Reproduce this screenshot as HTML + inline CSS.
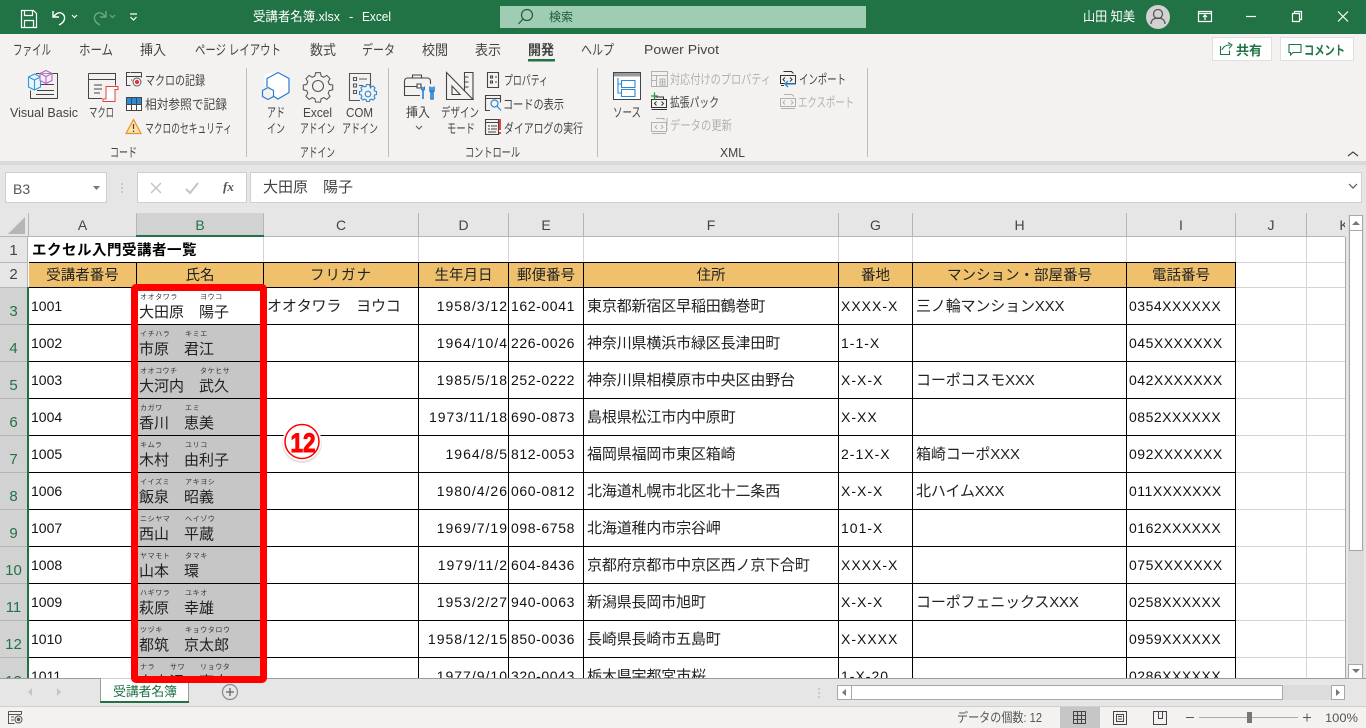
<!DOCTYPE html>
<html lang="ja"><head><meta charset="utf-8"><title>受講者名簿.xlsx - Excel</title>
<style>
html,body{margin:0;padding:0;width:1366px;height:728px;overflow:hidden;background:#e6e6e6}
body{position:relative;font-family:"Liberation Sans","Noto Sans CJK JP",sans-serif}
svg{position:absolute;left:0;top:0;font-family:"Liberation Sans","Noto Sans CJK JP",sans-serif}
svg text{white-space:pre}
#grid{position:absolute;left:0;top:213px;width:1345px;height:465px;overflow:hidden;background:#fff}
#gridin{position:absolute;left:0;top:-213px;width:1345px;height:700px}
.r{position:absolute;left:0;width:1345px;height:37px}
.r span{position:absolute;top:10px;height:18px;line-height:18px;font-size:14px;white-space:nowrap;color:#111}
.r .j{top:11px;font-size:15px;letter-spacing:-.15px;color:#222}
.a{left:31px}.cc{left:267px}.d{left:418px;width:90px;text-align:right;letter-spacing:1px}.e{left:511px;letter-spacing:.6px}.f{left:587px}.g{left:841px;letter-spacing:1px}.h{left:916px}.i{left:1129px;letter-spacing:.5px}
.r .nm{left:139px;top:17px;font-size:15px;letter-spacing:0;color:#222}
.r .fu{top:7px;height:8px;line-height:8px;font-size:7px;letter-spacing:.6px;color:#333}
.r .rh{left:0;width:27px;top:16px;text-align:center;color:#217346;font-size:15px}
.hd{position:absolute;top:264px;height:25px;line-height:25px;text-align:center;font-size:14.5px;color:#222;white-space:nowrap}
.ch{position:absolute;top:213px;height:24px;line-height:24px;text-align:center;font-size:14px;color:#444}
#frame{position:absolute;left:131px;top:284px;width:136px;height:399px;box-sizing:border-box;border:7px solid #f00;border-radius:5px}
</style></head><body>

<!-- chrome -->
<svg width="1366" height="728" viewBox="0 0 1366 728" style="z-index:1">
<rect width="1366" height="34" fill="#217346"/>
<rect y="34" width="1366" height="127" fill="#f3f2f1"/>
<rect y="161" width="1366" height="4" fill="#d9d9d9"/>
<rect x="500" y="6" width="366" height="22" fill="#9fcdb3"/>

<!-- QAT -->
<g fill="none" stroke="#fff" stroke-width="1.2">
<path d="M21.5 10.5h12l3 3v14h-15zM24.5 10.5v5h8v-5M24.5 27.5v-7h9v7"/>
<path d="M53 11v6h6M53.5 17c2-3 5-5 7.5-4 3 1 4.5 4 3 7.5-1 2-3 3.5-5 4.5" stroke-width="1.4"/>
<path d="M72 15l2.5 2.5 2.5-2.5"/>
<g stroke="#6ea588"><path d="M106 11v6h-6M105.500 17c-2-3-5-5-7.500-4-3 1-4.500 4-3 7.500 1 2 3 3.500 5 4.500" stroke-width="1.400"/><path d="M110 15l2.500 2.500 2.500-2.500"/></g>
<path d="M130 14h7M130.500 17l3 3 3-3"/>
</g>
<g fill="#fff" font-size="13">
<text x="253" y="21" textLength="87" lengthAdjust="spacingAndGlyphs">受講者名簿.xlsx</text>
<text x="349" y="21">-</text>
<text x="362" y="21" textLength="29" lengthAdjust="spacingAndGlyphs">Excel</text>
<text x="1083" y="21" textLength="52" lengthAdjust="spacingAndGlyphs">山田 知美</text>
</g>
<g fill="none" stroke="#1e5c3a" stroke-width="1.2"><circle cx="527" cy="15" r="5.500"/><path d="M523 19l-4.500 5"/></g>
<text x="549" y="21" font-size="12" fill="#1e5c3a" textLength="24" lengthAdjust="spacingAndGlyphs">検索</text>
<circle cx="1158" cy="17" r="12" fill="#d2d2d2"/>
<g fill="none" stroke="#555" stroke-width="1.300"><circle cx="1158" cy="14" r="4.500"/><path d="M1151 24c0-4 3-6 7-6s7 2 7 6"/></g>
<g fill="none" stroke="#fff" stroke-width="1.200">
<path d="M1198.500 11.500h13v10h-13zM1198.500 13.500h13M1205 20v-5M1203 17l2-2 2 2"/>
<path d="M1246 16.500h10"/>
<path d="M1292.500 13.500h7v8h-7zM1294.500 13.500v-2h7v8h-2"/>
<path d="M1338 11.500l10 10M1348 11.500l-10 10"/>
</g>

<!-- tabs -->
<g font-size="14" fill="#444">
<text x="13" y="55" textLength="38" lengthAdjust="spacingAndGlyphs">ファイル</text>
<text x="79" y="55" textLength="34" lengthAdjust="spacingAndGlyphs">ホーム</text>
<text x="140" y="55" textLength="26" lengthAdjust="spacingAndGlyphs">挿入</text>
<text x="195" y="55" textLength="86" lengthAdjust="spacingAndGlyphs">ページ レイアウト</text>
<text x="310" y="55" textLength="26" lengthAdjust="spacingAndGlyphs">数式</text>
<text x="362" y="55" textLength="33" lengthAdjust="spacingAndGlyphs">データ</text>
<text x="422" y="55" textLength="26" lengthAdjust="spacingAndGlyphs">校閲</text>
<text x="475" y="55" textLength="26" lengthAdjust="spacingAndGlyphs">表示</text>
<text x="528" y="55" textLength="26" lengthAdjust="spacingAndGlyphs" font-weight="700">開発</text>
<text x="581" y="55" textLength="33" lengthAdjust="spacingAndGlyphs">ヘルプ</text>
<text x="644" y="54" font-size="13" textLength="75" lengthAdjust="spacingAndGlyphs">Power Pivot</text>
</g>
<rect x="528" y="59" width="27" height="2.500" fill="#217346"/>
<rect x="1212.500" y="37.500" width="59" height="23" fill="#fff" stroke="#e1dfdd"/>
<rect x="1280.500" y="37.500" width="73" height="23" fill="#fff" stroke="#e1dfdd"/>
<g fill="none" stroke="#217346" stroke-width="1.100">
<path d="M1220.500 46v8.500h9v-4M1222 50c1-3 4-5 8-5M1228 42.500l4 2.500-3 3.500"/>
<path d="M1289 44.500h12v8h-8l-2.500 2.500v-2.500h-1.500z"/>
</g>
<g font-size="13" font-weight="700" fill="#217346">
<text x="1236" y="55" textLength="26" lengthAdjust="spacingAndGlyphs">共有</text>
<text x="1304" y="55" textLength="41" lengthAdjust="spacingAndGlyphs">コメント</text>
</g>

<!-- separators -->
<g fill="#bdbdbd"><rect x="246" y="68" width="1" height="89"/><rect x="388" y="68" width="1" height="89"/><rect x="597" y="68" width="1" height="89"/><rect x="867" y="68" width="1" height="89"/></g>

<!-- ribbon labels -->
<g font-size="13" fill="#444">
<text x="10" y="117" font-size="12.500" textLength="68" lengthAdjust="spacingAndGlyphs">Visual Basic</text>
<text x="89" y="117" textLength="25" lengthAdjust="spacingAndGlyphs">マクロ</text>
<text x="145" y="85" textLength="60" lengthAdjust="spacingAndGlyphs">マクロの記録</text>
<text x="145" y="109" textLength="82" lengthAdjust="spacingAndGlyphs">相対参照で記録</text>
<text x="145" y="133" textLength="87" lengthAdjust="spacingAndGlyphs">マクロのセキュリティ</text>
<text x="267" y="117" textLength="18" lengthAdjust="spacingAndGlyphs">アド</text>
<text x="267" y="133" textLength="18" lengthAdjust="spacingAndGlyphs">イン</text>
<text x="303" y="117" font-size="12.500" textLength="29" lengthAdjust="spacingAndGlyphs">Excel</text>
<text x="300" y="133" textLength="35" lengthAdjust="spacingAndGlyphs">アドイン</text>
<text x="346" y="117" font-size="12.500" textLength="27" lengthAdjust="spacingAndGlyphs">COM</text>
<text x="342" y="133" textLength="36" lengthAdjust="spacingAndGlyphs">アドイン</text>
<text x="406" y="117" textLength="24" lengthAdjust="spacingAndGlyphs">挿入</text>
<text x="441" y="117" textLength="38" lengthAdjust="spacingAndGlyphs">デザイン</text>
<text x="447" y="133" textLength="28" lengthAdjust="spacingAndGlyphs">モード</text>
<text x="504" y="85" textLength="44" lengthAdjust="spacingAndGlyphs">プロパティ</text>
<text x="503" y="109" textLength="61" lengthAdjust="spacingAndGlyphs">コードの表示</text>
<text x="504" y="133" textLength="79" lengthAdjust="spacingAndGlyphs">ダイアログの実行</text>
<text x="613" y="117" textLength="28" lengthAdjust="spacingAndGlyphs">ソース</text>
<text x="670" y="107" textLength="49" lengthAdjust="spacingAndGlyphs">拡張パック</text>
<text x="799" y="84" textLength="47" lengthAdjust="spacingAndGlyphs">インポート</text>
<text x="110" y="157" textLength="27" lengthAdjust="spacingAndGlyphs">コード</text>
<text x="300" y="157" textLength="35" lengthAdjust="spacingAndGlyphs">アドイン</text>
<text x="465" y="157" textLength="55" lengthAdjust="spacingAndGlyphs">コントロール</text>
<text x="720" y="157" font-size="12.500" textLength="25" lengthAdjust="spacingAndGlyphs">XML</text>
</g>
<g font-size="13" fill="#b1b1b1">
<text x="670" y="84" textLength="101" lengthAdjust="spacingAndGlyphs">対応付けのプロパティ</text>
<text x="670" y="130" textLength="62" lengthAdjust="spacingAndGlyphs">データの更新</text>
<text x="798" y="107" textLength="56" lengthAdjust="spacingAndGlyphs">エクスポート</text>
</g>

<!-- ribbon icons -->
<g fill="none" stroke="#444" stroke-width="1">
<path d="M36 73.500h21.500v25h-27v-8M41 84.500h13M37 90.500h17M36 94.500h18"/>
<path d="M88.500 73.500h27v12M102 98.500h-13.500v-25M88.500 79.500h27M94 85h8M94 89h8M94 93h6"/>
<path d="M130 72.500h-3.500v13h4M126.500 76.500h15M141.500 72.500h-11M141.500 72.500v5"/>
<path d="M131 80h1M131 84h0"/>
</g>
<g fill="none" stroke="#2b9ae0" stroke-width="1.100"><path d="M28.500 77l6-3 6 3v10l-6 3-6-3zM28.500 77l6 3 6-3M34.500 80v10" fill="#eaf5fc"/></g>
<g fill="none" stroke="#b565c7" stroke-width="1.100"><path d="M40 73.500l6-3 6 3v7l-6 3-6-3zM40 73.500l6 3 6-3M46 76.500v7" fill="#f6ecf8"/></g>
<path d="M106 86.500h12v3h-3v12h-12v-2.500h3z" fill="#fff" stroke="#e8403a" stroke-width="1"/>
<circle cx="137" cy="82" r="4" fill="#fff" stroke="#555"/><circle cx="137" cy="82" r="2.200" fill="#e8303a"/>
<rect x="126.500" y="97.500" width="15" height="13" fill="#fff" stroke="#444"/>
<rect x="127" y="98" width="14" height="6" fill="#2b8ad6"/>
<path d="M131.500 97.500v13M136.500 97.500v13M126.500 104.500h15" stroke="#444" fill="none"/>
<path d="M133.500 119.500l7.500 14h-15z" fill="#fbe3a8" stroke="#e8912d" stroke-width="1.200"/>
<path d="M133.500 124v5M133.500 130.500v1.500" stroke="#444" stroke-width="1.200" fill="none"/>

<g fill="none" stroke="#2b7cd3" stroke-width="1.200">
<path d="M278 72.500l11 6.500v13l-11 7-7-4v-8.500l-7-1v-11z" fill="#fff" stroke="none"/>
<path d="M267 87v-8.500l11-6 11 6v14l-11 6.500-5-3"/>
<path d="M268 87.500l5.500 3v6l-5.500 3-5.500-3v-6z"/>
</g>
<g fill="none" stroke="#555" stroke-width="1.100">
<circle cx="318" cy="86" r="5.500"/>
<path d="M315.500 72.500h5l.8 3.600 2.800 1.200 3.200-2 3.400 3.500-2 3.100 1.200 2.900 3.600.7v5l-3.600.8-1.200 2.800 2 3.200-3.400 3.400-3.200-2-2.800 1.200-.8 3.600h-5l-.8-3.600-2.800-1.200-3.200 2-3.400-3.400 2-3.200-1.200-2.800-3.600-.8v-5l3.600-.7 1.200-2.900-2-3.100 3.400-3.500 3.200 2 2.800-1.200z" transform="translate(318 86) scale(.95) translate(-318 -86.500)"/>
<path d="M360 100.500h-10.500v-27h21v15"/>
<path d="M353.500 77.500h3v3h-3zM353.500 84h3v3h-3zM353.500 90.500h3v3h-3zM359 79h8M359 85.500h4"/>
</g>
<g fill="none" stroke="#2b8ad6" stroke-width="1.100">
<circle cx="368" cy="94" r="2.800"/>
<path d="M366.500 87.500h3l.4 1.800 1.500.6 1.600-1 2.100 2.100-1 1.600.6 1.500 1.800.4v3l-1.800.4-.6 1.500 1 1.600-2.100 2.100-1.600-1-1.500.6-.4 1.800h-3l-.4-1.800-1.500-.6-1.600 1-2.100-2.100 1-1.600-.6-1.500-1.800-.4v-3l1.800-.4.600-1.500-1-1.600 2.100-2.100 1.600 1 1.500-.6z" transform="translate(0 -3)"/>
</g>
<g fill="none" stroke="#444" stroke-width="1.100">
<path d="M420 95.500h-15.500v-14.500a3 3 0 0 1 3-3h20a3 3 0 0 1 3 3v3M404.500 86.500h12M417 84h4v4h-4zM412.500 78v-3h9v3"/>
<path d="M446.500 72.500l26.500 27h-26.500zM452 86l8 8.500h-8zM464.500 90.500v-18h8.500v27M464.500 77h4M464.500 82h4M464.500 87h4"/>
<path d="M487.500 72.500h11v15h-11zM490.500 76h2v2h-2zM490.500 81h2v2h-2zM495 77h2M495 82h2"/>
<path d="M490 110.500h-4.500v-15h15v7M485.500 98.500h15"/>
<path d="M485.500 119.500h13v15h-13zM485.500 122.500h13M488 126h2M488 129h2M491 126h6M491 129h6M488 132h8"/>
</g>
<path d="M423 87v12M432 87v4M430 86.500v4.500h4v-4.500M431 92h2v7h-2z" stroke="#2b7cd3" stroke-width="1.600" fill="none"/>
<path d="M424.500 86.500v3l-1.500 1.500-1.500-1.500v-3" stroke="#2b7cd3" fill="none"/>
<g fill="none" stroke="#2b8ad6" stroke-width="1.200"><circle cx="494.500" cy="103.500" r="3.500"/><path d="M497 106l4 4.500"/></g>
<rect x="499" y="119" width="2" height="11" fill="#e8403a"/><rect x="499" y="132" width="2" height="2" fill="#e8403a"/>

<rect x="613.500" y="72.500" width="27" height="27" fill="#fff" stroke="#444" stroke-width="1"/>
<rect x="614" y="73" width="26" height="3.500" fill="#9a9a9a"/>
<g fill="none" stroke="#2b8ad6" stroke-width="1.100"><path d="M621.500 80.500h13.500v7h-13.500zM621.500 89.500h13.500v7h-13.500zM618 78v15h3.500M618 84h3.500"/></g>

<g fill="none" stroke="#b1b1b1" stroke-width="1">
<path d="M651.500 71.500h16v15h-16zM651.500 75.500h16M656.500 75.500v11M651.500 80.500h5M660 79h5v6h-5zM662.500 79v6M660 82h5"/>
<path d="M656 118.500h8v2M651.500 122.500h15v9h-15zM652 133.500h14"/>
<path d="M657 125l-2 2 2 2M661 125l2 2-2 2M667 118v8M667 128v2"/>
<path d="M784 94.500h8l2 2M780.500 98.500h15v8h-15zM781 108.500h14"/>
<path d="M785 100.500l-2 2 2 2M791 100.500l2 2-2 2"/>
</g>
<g fill="none" stroke="#333" stroke-width="1">
<path d="M655.500 97h8v2.500M651.500 99.500h15v8h-15zM651.500 109.500h15.500"/>
<path d="M656.500 101.500l-2 2 2 2M661.500 101.500l2 2-2 2"/>
<path d="M783.500 71.500h8l2 2M780.500 75.500h15v8h-15zM784 85.500h-3"/>
<path d="M785 77.500l-2 2 2 2M790 77.500l2 2-2 2"/>
</g>
<path d="M651 96h7M654.500 92.500v7" stroke="#1f9b3f" stroke-width="1.300" fill="none"/>
<path d="M796 84h-11M788 81l-3 3 3 3" stroke="#2b8ad6" stroke-width="1.300" fill="none"/>
<path d="M416 126l3 3 3-3" stroke="#555" fill="none"/>
<path d="M1348 156l5-4 5 4" stroke="#444" fill="none" stroke-width="1.200"/>

<!-- formula bar -->
<rect x="5.500" y="172.500" width="101" height="30" fill="#fff" stroke="#cfcfcf"/>
<rect x="137.500" y="172.500" width="109" height="30" fill="#fff" stroke="#cfcfcf"/>
<rect x="250.500" y="172.500" width="1111" height="30" fill="#fff" stroke="#cfcfcf"/>
<text x="13" y="194" font-size="14" fill="#555">B3</text>
<path d="M93 186h7l-3.500 4z" fill="#777"/>
<path d="M122 183v2M122 187v2M122 191v2" stroke="#aaa" fill="none"/>
<path d="M151 183l10 10M161 183l-10 10" stroke="#c4c4c4" stroke-width="1.500" fill="none"/>
<path d="M186 189l4 4 8-10" stroke="#c4c4c4" stroke-width="2" fill="none"/>
<text x="223" y="191" font-family="Liberation Serif" font-style="italic" font-weight="700" font-size="13" fill="#555">fx</text>
<text x="263" y="192" font-size="15" fill="#444" textLength="90" lengthAdjust="spacing">大田原　陽子</text>
<path d="M1349 184l4 4 4-4" stroke="#555" fill="none" stroke-width="1.200"/>

<!-- tab bar -->
<rect y="678" width="1366" height="28" fill="#e6e6e6"/>
<rect y="706" width="1366" height="22" fill="#f3f2f1"/>
<rect y="706" width="1366" height="1" fill="#cfcfcf"/>
<rect y="678" width="1366" height="1" fill="#9c9c9c"/>
<path d="M32 688v8l-4-4zM57 688v8l4-4z" fill="#c4c4c4"/>
<rect x="100.500" y="678" width="88" height="24" fill="#fff" stroke="#9c9c9c"/>
<rect x="100" y="701" width="89" height="2" fill="#217346"/>
<text x="113" y="696" font-size="13" fill="#217346" textLength="64" lengthAdjust="spacing">受講者名簿</text>
<circle cx="230" cy="692" r="7.500" fill="none" stroke="#8a8a8a" stroke-width="1.200"/>
<path d="M226 692h8M230 688v8" stroke="#666" stroke-width="1.300" fill="none"/>
<path d="M819 688v2M819 692v2M819 696v2" stroke="#aaa" fill="none"/>
<rect x="837" y="685" width="508" height="15" fill="#dcdcdc"/>
<rect x="837.500" y="685.500" width="14" height="14" fill="#fff" stroke="#a8a8a8"/>
<rect x="851.500" y="685.500" width="431" height="14" fill="#fff" stroke="#a8a8a8"/>
<rect x="1331.500" y="685.500" width="13" height="14" fill="#fff" stroke="#a8a8a8"/>
<path d="M846 689v7l-4-3.500zM1336 689v7l4-3.500z" fill="#777"/>

<!-- status bar -->
<g fill="none" stroke="#555"><path d="M8.500 711.500h13v3M8.500 711.500v12h6M8.500 714.500h13M11 717h3M11 720h3"/><circle cx="18.500" cy="719.500" r="3.500"/><circle cx="18.500" cy="719.500" r="1.200" fill="#555"/></g>
<text x="957" y="722" font-size="13" fill="#555" textLength="85" lengthAdjust="spacingAndGlyphs">データの個数: 12</text>
<rect x="1060" y="707" width="40" height="21" fill="#c6c6c6"/>
<g fill="none" stroke="#444"><path d="M1073.500 711.500h12v12h-12zM1077.500 711.500v12M1081.500 711.500v12M1073.500 715.500h12M1073.500 719.500h12"/>
<path d="M1113.500 711.500h13v13h-13zM1116.500 714.500h7v7h-7zM1118 716.500h4M1118 719h4"/>
<path d="M1153.500 711.500h13v13h-13zM1158.500 711.500v7h4v-7"/></g>
<path d="M1186 717.500h8M1303 717.500h8M1307 713.500v8" stroke="#555" fill="none"/>
<rect x="1199" y="717" width="99" height="1" fill="#aaa"/>
<rect x="1247" y="712" width="5" height="11" fill="#777"/>
<text x="1325" y="722" font-size="12" fill="#555" textLength="33" lengthAdjust="spacingAndGlyphs">100%</text>

<!-- vertical scrollbar -->
<rect x="1345" y="237" width="1" height="441" fill="#a8a8a8"/>
<rect x="1348" y="215" width="16" height="463" fill="#dcdcdc"/>
<rect x="1349.500" y="215.500" width="13" height="15" fill="#fff" stroke="#a8a8a8"/>
<rect x="1349.500" y="230.500" width="13" height="320" fill="#fff" stroke="#a8a8a8"/>
<rect x="1348.500" y="664.500" width="14" height="14" fill="#fff" stroke="#a8a8a8"/>
<path d="M1352 225h8l-4-4zM1352 669h8l-4 4z" fill="#777"/>
</svg>

<!-- grid -->
<div id="grid" style="z-index:2"><div id="gridin">
<svg width="1345" height="700" viewBox="0 0 1345 700">
<rect y="213" width="1345" height="24" fill="#e6e6e6"/>
<rect x="0" y="213" width="28" height="465" fill="#e6e6e6"/>
<path d="M8 234h17v-17z" fill="#b5b5b5"/>
<rect x="136" y="213" width="127" height="22" fill="#d2d2d2"/>
<rect x="0" y="287" width="27" height="391" fill="#d2d2d2"/>
<rect x="29" y="262" width="1206" height="25" fill="#efc16c"/>
<rect x="136" y="324" width="127" height="354" fill="#c6c6c6"/>
<g fill="#d4d4d4">
<rect x="263" y="237" width="1" height="25"/><rect x="418" y="237" width="1" height="25"/><rect x="508" y="237" width="1" height="25"/><rect x="583" y="237" width="1" height="25"/><rect x="838" y="237" width="1" height="25"/><rect x="912" y="237" width="1" height="25"/><rect x="1126" y="237" width="1" height="25"/><rect x="1235" y="237" width="1" height="441"/><rect x="1306" y="237" width="1" height="441"/>
<rect x="1235" y="262" width="110" height="1"/><rect x="1235" y="287" width="110" height="1"/><rect x="1235" y="324" width="110" height="1"/><rect x="1235" y="361" width="110" height="1"/><rect x="1235" y="398" width="110" height="1"/><rect x="1235" y="435" width="110" height="1"/><rect x="1235" y="472" width="110" height="1"/><rect x="1235" y="509" width="110" height="1"/><rect x="1235" y="546" width="110" height="1"/><rect x="1235" y="583" width="110" height="1"/><rect x="1235" y="620" width="110" height="1"/><rect x="1235" y="657" width="110" height="1"/>
</g>
<g fill="#b5b5b5">
<rect x="28" y="213" width="1" height="24"/><rect x="136" y="213" width="1" height="24"/><rect x="263" y="213" width="1" height="24"/><rect x="418" y="213" width="1" height="24"/><rect x="508" y="213" width="1" height="24"/><rect x="583" y="213" width="1" height="24"/><rect x="838" y="213" width="1" height="24"/><rect x="912" y="213" width="1" height="24"/><rect x="1126" y="213" width="1" height="24"/><rect x="1235" y="213" width="1" height="24"/><rect x="1306" y="213" width="1" height="24"/>
<rect y="262" width="28" height="1"/><rect y="287" width="28" height="1"/><rect y="324" width="28" height="1"/><rect y="361" width="28" height="1"/><rect y="398" width="28" height="1"/><rect y="435" width="28" height="1"/><rect y="472" width="28" height="1"/><rect y="509" width="28" height="1"/><rect y="546" width="28" height="1"/><rect y="583" width="28" height="1"/><rect y="620" width="28" height="1"/><rect y="657" width="28" height="1"/>
<rect y="236" width="1345" height="1"/>
<rect x="27" y="237" width="1" height="50"/>
</g>
<rect x="136" y="235" width="128" height="2" fill="#217346"/>
<rect x="27" y="287" width="2" height="391" fill="#217346"/>
<g fill="#000">
<rect x="29" y="262" width="1207" height="1"/><rect x="29" y="287" width="1207" height="1"/><rect x="29" y="324" width="1207" height="1"/><rect x="29" y="361" width="1207" height="1"/><rect x="29" y="398" width="1207" height="1"/><rect x="29" y="435" width="1207" height="1"/><rect x="29" y="472" width="1207" height="1"/><rect x="29" y="509" width="1207" height="1"/><rect x="29" y="546" width="1207" height="1"/><rect x="29" y="583" width="1207" height="1"/><rect x="29" y="620" width="1207" height="1"/><rect x="29" y="657" width="1207" height="1"/>
<rect x="136" y="262" width="1" height="416"/><rect x="263" y="262" width="1" height="416"/><rect x="418" y="262" width="1" height="416"/><rect x="508" y="262" width="1" height="416"/><rect x="583" y="262" width="1" height="416"/><rect x="838" y="262" width="1" height="416"/><rect x="912" y="262" width="1" height="416"/><rect x="1126" y="262" width="1" height="416"/><rect x="1235" y="262" width="1" height="416"/>
</g>
</svg>

<div class="ch" style="left:29px;width:107px">A</div><div class="ch" style="left:137px;width:126px;color:#217346">B</div><div class="ch" style="left:264px;width:154px">C</div><div class="ch" style="left:419px;width:89px">D</div><div class="ch" style="left:509px;width:74px">E</div><div class="ch" style="left:584px;width:254px">F</div><div class="ch" style="left:839px;width:73px">G</div><div class="ch" style="left:913px;width:213px">H</div><div class="ch" style="left:1127px;width:108px">I</div><div class="ch" style="left:1236px;width:70px">J</div><div class="ch" style="left:1334px;width:20px">K</div>
<div class="ch" style="left:0;top:239px;width:27px;font-size:15px">1</div>
<div class="ch" style="left:0;top:263px;width:27px;font-size:15px">2</div>
<div style="position:absolute;left:32px;top:242px;height:18px;line-height:18px;font-size:14.5px;font-weight:700;letter-spacing:.5px;color:#000;white-space:nowrap">エクセル入門受講者一覧</div>
<div class="hd" style="left:29px;width:107px">受講者番号</div><div class="hd" style="left:137px;width:126px">氏名</div><div class="hd" style="left:264px;width:154px;letter-spacing:1px">フリガナ</div><div class="hd" style="left:419px;width:89px">生年月日</div><div class="hd" style="left:509px;width:74px">郵便番号</div><div class="hd" style="left:584px;width:254px">住所</div><div class="hd" style="left:839px;width:73px">番地</div><div class="hd" style="left:913px;width:213px">マンション・部屋番号</div><div class="hd" style="left:1127px;width:108px">電話番号</div>

<div class="r" style="top:287px"><span class="rh">3</span><span class="a">1001</span><span class="fu" style="left:140px">オオタワラ</span><span class="fu" style="left:200px">ヨウコ</span><span class="nm">大田原　陽子</span><span class="cc j">オオタワラ　ヨウコ</span><span class="d">1958/3/12</span><span class="e">162-0041</span><span class="f j">東京都新宿区早稲田鶴巻町</span><span class="g">XXXX-X</span><span class="h j">三ノ輪マンションXXX</span><span class="i">0354XXXXXX</span></div>
<div class="r" style="top:324px"><span class="rh">4</span><span class="a">1002</span><span class="fu" style="left:140px">イチハラ</span><span class="fu" style="left:185px">キミエ</span><span class="nm">市原　君江</span><span class="d">1964/10/4</span><span class="e">226-0026</span><span class="f j">神奈川県横浜市緑区長津田町</span><span class="g">1-1-X</span><span class="i">045XXXXXXX</span></div>
<div class="r" style="top:361px"><span class="rh">5</span><span class="a">1003</span><span class="fu" style="left:140px">オオコウチ</span><span class="fu" style="left:200px">タケヒサ</span><span class="nm">大河内　武久</span><span class="d">1985/5/18</span><span class="e">252-0222</span><span class="f j">神奈川県相模原市中央区由野台</span><span class="g">X-X-X</span><span class="h j">コーポコスモXXX</span><span class="i">042XXXXXXX</span></div>
<div class="r" style="top:398px"><span class="rh">6</span><span class="a">1004</span><span class="fu" style="left:140px">カガワ</span><span class="fu" style="left:185px">エミ</span><span class="nm">香川　恵美</span><span class="d">1973/11/18</span><span class="e">690-0873</span><span class="f j">島根県松江市内中原町</span><span class="g">X-XX</span><span class="i">0852XXXXXX</span></div>
<div class="r" style="top:435px"><span class="rh">7</span><span class="a">1005</span><span class="fu" style="left:140px">キムラ</span><span class="fu" style="left:185px">ユリコ</span><span class="nm">木村　由利子</span><span class="d">1964/8/5</span><span class="e">812-0053</span><span class="f j">福岡県福岡市東区箱崎</span><span class="g">2-1X-X</span><span class="h j">箱崎コーポXXX</span><span class="i">092XXXXXXX</span></div>
<div class="r" style="top:472px"><span class="rh">8</span><span class="a">1006</span><span class="fu" style="left:140px">イイズミ</span><span class="fu" style="left:185px">アキヨシ</span><span class="nm">飯泉　昭義</span><span class="d">1980/4/26</span><span class="e">060-0812</span><span class="f j">北海道札幌市北区北十二条西</span><span class="g">X-X-X</span><span class="h j">北ハイムXXX</span><span class="i">011XXXXXXX</span></div>
<div class="r" style="top:509px"><span class="rh">9</span><span class="a">1007</span><span class="fu" style="left:140px">ニシヤマ</span><span class="fu" style="left:185px">ヘイゾウ</span><span class="nm">西山　平蔵</span><span class="d">1969/7/19</span><span class="e">098-6758</span><span class="f j">北海道稚内市宗谷岬</span><span class="g">101-X</span><span class="i">0162XXXXXX</span></div>
<div class="r" style="top:546px"><span class="rh">10</span><span class="a">1008</span><span class="fu" style="left:140px">ヤマモト</span><span class="fu" style="left:185px">タマキ</span><span class="nm">山本　環</span><span class="d">1979/11/2</span><span class="e">604-8436</span><span class="f j">京都府京都市中京区西ノ京下合町</span><span class="g">XXXX-X</span><span class="i">075XXXXXXX</span></div>
<div class="r" style="top:583px"><span class="rh">11</span><span class="a">1009</span><span class="fu" style="left:140px">ハギワラ</span><span class="fu" style="left:185px">ユキオ</span><span class="nm">萩原　幸雄</span><span class="d">1953/2/27</span><span class="e">940-0063</span><span class="f j">新潟県長岡市旭町</span><span class="g">X-X-X</span><span class="h j">コーポフェニックスXXX</span><span class="i">0258XXXXXX</span></div>
<div class="r" style="top:620px"><span class="rh">12</span><span class="a">1010</span><span class="fu" style="left:140px">ツヅキ</span><span class="fu" style="left:185px">キョウタロウ</span><span class="nm">都筑　京太郎</span><span class="d">1958/12/15</span><span class="e">850-0036</span><span class="f j">長崎県長崎市五島町</span><span class="g">X-XXXX</span><span class="i">0959XXXXXX</span></div>
<div class="r" style="top:657px"><span class="rh">13</span><span class="a">1011</span><span class="fu" style="left:140px">ナラ</span><span class="fu" style="left:170px">サワ</span><span class="fu" style="left:200px">リョウタ</span><span class="nm">奈良沢　亮太</span><span class="d">1977/9/10</span><span class="e">320-0043</span><span class="f j">栃木県宇都宮市桜</span><span class="g">1-X-20</span><span class="i">0286XXXXXX</span></div>
</div></div>

<!-- annotation -->
<div id="frame" style="z-index:3"></div>
<svg width="1366" height="728" viewBox="0 0 1366 728" style="z-index:4;pointer-events:none">
<circle cx="302" cy="443" r="20" fill="#000" opacity=".12"/>
<circle cx="302" cy="441.500" r="19.500" fill="#fff"/>
<circle cx="302" cy="441.500" r="17" fill="#fff" stroke="#f00" stroke-width="1.500"/>
<text x="303" y="452" text-anchor="middle" font-size="27" font-weight="700" fill="#f00" stroke="#f00" stroke-width="1" textLength="25" lengthAdjust="spacingAndGlyphs">12</text>
</svg>
</body></html>
